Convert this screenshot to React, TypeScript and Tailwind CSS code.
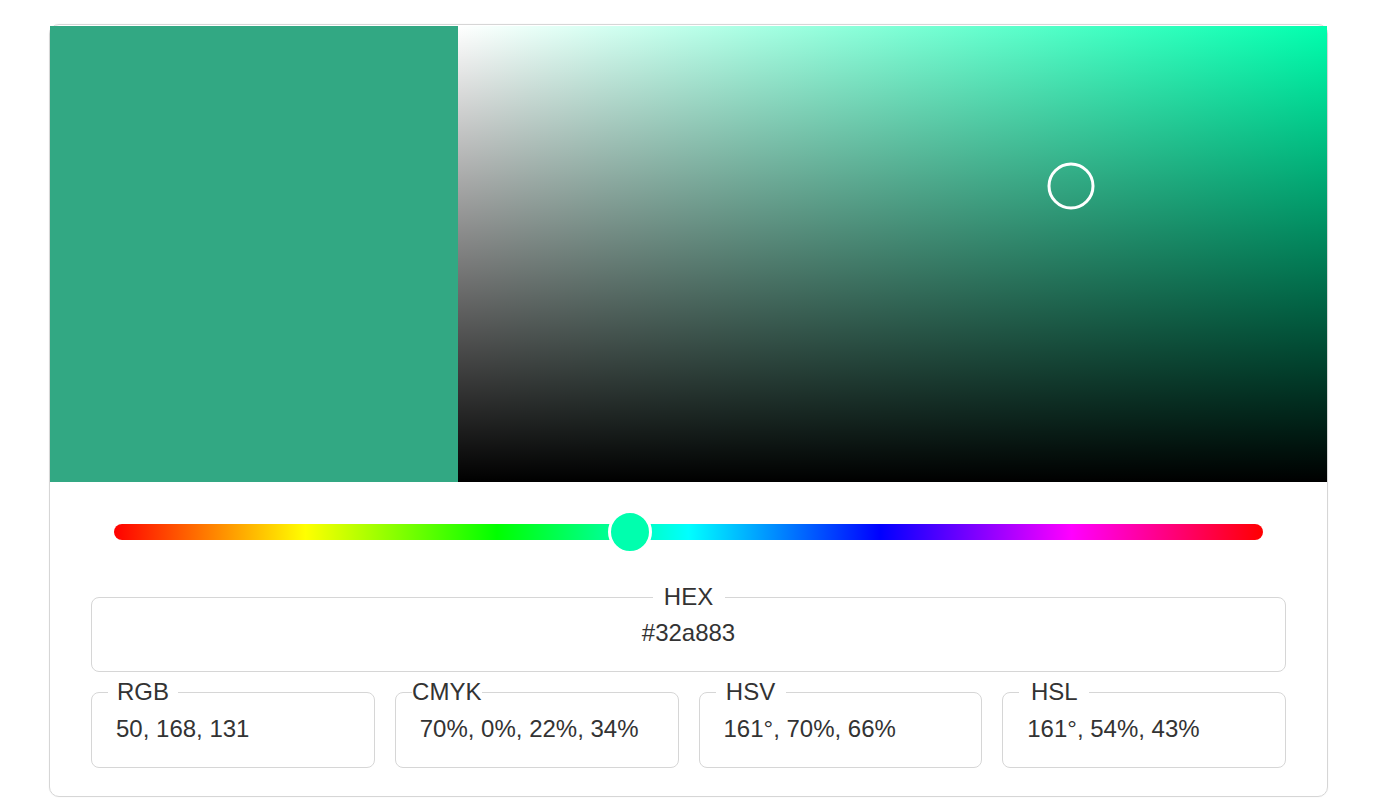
import React from 'react';

interface ColorFormat {
  label: string;
  value: string;
}

const color = {
  hex: '#32a883',
  hue: 161,
  formats: [
    { label: 'RGB', value: '50, 168, 131' },
    { label: 'CMYK', value: '70%, 0%, 22%, 34%' },
    { label: 'HSV', value: '161°, 70%, 66%' },
    { label: 'HSL', value: '161°, 54%, 43%' },
  ] as ColorFormat[],
};

// note: chrome positions a legend by its own text-align, so centre the label in a span
const FormatBox = ({ label, value }: ColorFormat) => (
  <fieldset className="h-[90px] rounded-[8px] border border-[#d6d6d6] px-[24px]">
    <legend className="-ml-[8px] text-left leading-[28px]">
      <span className="inline-block w-[70px] text-center">{label}</span>
    </legend>
    <div className="mt-[9px] leading-[28px] whitespace-nowrap">{value}</div>
  </fieldset>
);

const App = () => {
  return (
    <div className="min-h-[808px] bg-white pt-6 text-[24px] text-[#333] [font-family:'Liberation_Sans',Arial,sans-serif]">
      <div className="ml-[49px] w-[1279px] rounded-[10px] border border-[#d6d6d6] pb-[28px] pt-px shadow-[0_0_2px_rgba(0,0,0,0.06)]">
        {/* preview + saturation/value area */}
        <div className="flex h-[456px]">
          <div className="w-[408px] bg-[#32a883]" />
          <div className="relative flex-1 bg-[linear-gradient(to_right,#fff,#00ffae)]">
            <div className="absolute inset-0 bg-[linear-gradient(to_top,#000,rgba(0,0,0,0))]" />
            <div className="absolute left-[70.5%] top-[35.1%] h-[47px] w-[47px] -translate-x-1/2 -translate-y-1/2 rounded-full border-[3px] border-white" />
          </div>
        </div>

        {/* hue slider */}
        <div className="px-[64px] pt-[42px]">
          <div className="relative h-4 rounded-full bg-[linear-gradient(to_right,#f00,#ff0,#0f0,#0ff,#00f,#f0f,#f00)]">
            <div
              className="absolute top-1/2 h-[44px] w-[44px] -translate-x-1/2 -translate-y-1/2 rounded-full border-[3px] border-white bg-[#00ffae]"
              style={{ left: `${(color.hue / 360) * 100 + 0.2}%` }}
            />
          </div>
        </div>

        <div className="px-[41px] pt-[43px]">
          <fieldset className="h-[89px] rounded-[8px] border border-[#d6d6d6]">
            <legend className="mx-auto w-[72px] text-center leading-[28px]">HEX</legend>
            <div className="mt-[8px] text-center leading-[28px]">{color.hex}</div>
          </fieldset>

          <div className="mt-[6px] grid grid-cols-4 gap-x-[20px]">
            {color.formats.map((f) => (
              <FormatBox key={f.label} label={f.label} value={f.value} />
            ))}
          </div>
        </div>
      </div>
    </div>
  );
};

export default App;
